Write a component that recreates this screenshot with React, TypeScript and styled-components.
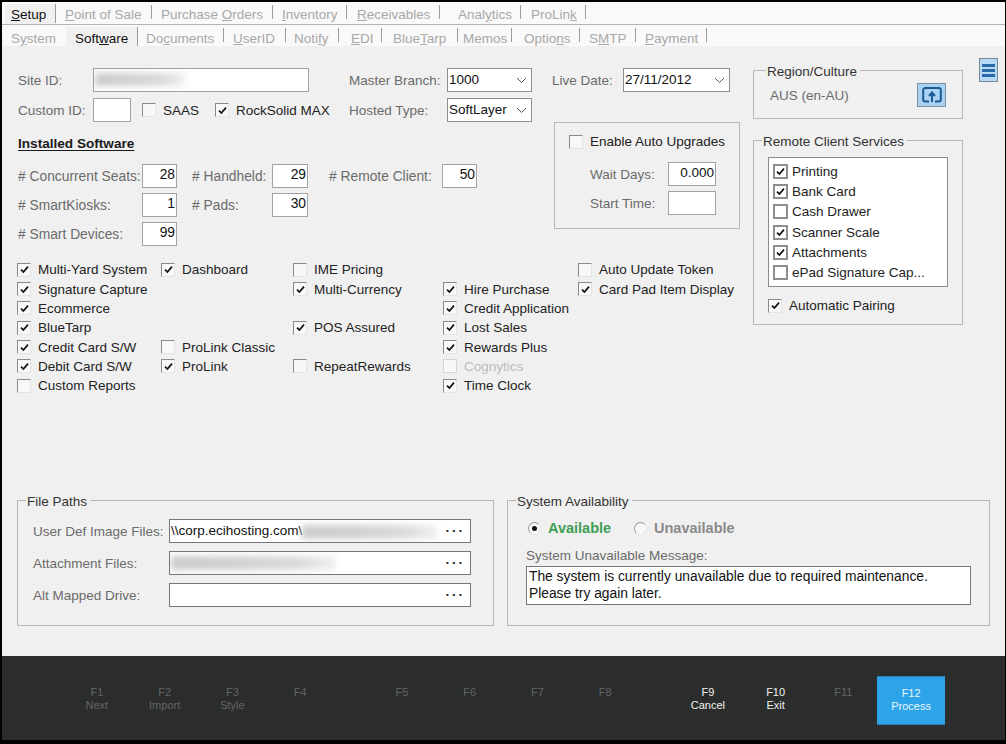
import React from "react";
import styled, { createGlobalStyle } from "styled-components";

const GlobalStyle = createGlobalStyle`
  html, body {
    margin: 0;
    padding: 0;
    background: #000;
  }
  body {
    font-family: "Liberation Sans", Arial, sans-serif;
    font-size: 13.5px;
    color: #222;
  }
`;

const Frame = styled.div`
  width: 1006px;
  height: 744px;
  box-sizing: border-box;
  padding: 2px 1px 4px 2px;
  background: #000;
`;
const Window = styled.div`
  height: 100%;
  display: flex;
  flex-direction: column;
  background: #f0f0f0;
`;

/* ---- tabs ---- */
const TabBar = styled.div<{ $main?: boolean }>`
  height: ${(p) => (p.$main ? "23px" : "21px")};
  box-sizing: border-box;
  display: flex;
  flex: none;
  background: #f9f9f9;
  padding: ${(p) => (p.$main ? "2px 0 0 3px" : "2px 0 0 3px")};
  line-height: ${(p) => (p.$main ? "22px" : "24px")};
  border-bottom: ${(p) => (p.$main ? "1px solid #b4b4b4" : "none")};
`;
const Tab = styled.div<{ $active?: boolean; $w: number; $pl?: number; $sep?: boolean }>`
  width: ${(p) => p.$w}px;
  box-sizing: border-box;
  padding-left: ${(p) => p.$pl ?? 9}px;
  white-space: nowrap;
  color: ${(p) => (p.$active ? "#111" : "#a8a8a8")};
  background-color: ${(p) => (p.$active ? "#f0f0f0" : "transparent")};
  background-image: ${(p) =>
    p.$sep === false ? "none" : "linear-gradient(#9c9c9c, #9c9c9c)"};
  background-repeat: no-repeat;
  background-position: right 0 top ${(p) => (p.$active ? 0 : 1)}px;
  background-size: 1px ${(p) => (p.$active ? 19 : 14)}px;
  u {
    text-underline-offset: 1px;
  }
`;

/* ---- main form ---- */
const Body = styled.div`
  flex: 1;
  display: flex;
  flex-direction: column;
  justify-content: space-between;
  padding: 12px 15px 30px 15px;
`;
const TopArea = styled.div`
  display: flex;
`;
const LeftMid = styled.div`
  width: 736px;
  flex: none;
  padding-top: 10px;
`;
const UpperForm = styled.div`
  display: flex;
  height: 192px;
`;
const LeftForm = styled.div`
  width: 534px;
  flex: none;
  padding-left: 1px;
`;
const MidForm = styled.div`
  width: 188px;
  flex: none;
`;
const Row = styled.div`
  display: flex;
  align-items: center;
  height: 24px;
  margin-bottom: 6px;
`;
const Label = styled.span<{ $w?: number; $ml?: number }>`
  width: ${(p) => p.$w ?? 75}px;
  margin-left: ${(p) => p.$ml ?? 0}px;
  flex: none;
  color: #6b6b6b;
  white-space: nowrap;
`;
const CheckSlot = styled.div<{ $w: number; $ml?: number }>`
  width: ${(p) => p.$w}px;
  margin-left: ${(p) => p.$ml ?? 0}px;
  flex: none;
`;
const Field = styled.div<{ $w: number; $right?: boolean }>`
  width: ${(p) => p.$w}px;
  height: 24px;
  flex: none;
  box-sizing: border-box;
  border: 1.5px solid #a2a2a2;
  background: #fff;
  color: #111;
  line-height: 20px;
  padding: 0 1px;
  text-align: ${(p) => (p.$right ? "right" : "left")};
  overflow: hidden;
  white-space: nowrap;
`;
const SelectBox = styled.div<{ $w: number }>`
  width: ${(p) => p.$w}px;
  height: 24px;
  flex: none;
  box-sizing: border-box;
  display: flex;
  align-items: center;
  justify-content: space-between;
  border: 1.5px solid #8f8f8f;
  background: #fff;
  color: #111;
  padding: 0 4px 0 1px;
  white-space: nowrap;
  line-height: 18px;
`;
const Blurred = styled.span<{ $w: number; $ml?: number; $h?: number }>`
  display: inline-block;
  vertical-align: middle;
  width: ${(p) => p.$w}px;
  height: ${(p) => p.$h ?? 13}px;
  margin-left: ${(p) => p.$ml ?? 0}px;
  background: linear-gradient(90deg, #cbcbcb, #d2d2d2 45%, #dadada 75%, #f0f0f0);
  filter: blur(3px);
`;
const Heading = styled.div`
  font-weight: bold;
  color: #1a1a1a;
  text-decoration: underline;
  text-underline-offset: 2px;
  margin-top: 14px;
  margin-bottom: 12px;
  line-height: 16px;
  font-size: 13.6px;
`;
const CountRow = styled.div`
  display: flex;
  align-items: center;
  height: 24px;
  margin-bottom: 5px;
  font-size: 13.8px;
`;

/* ---- checkboxes ---- */
const Box = styled.span<{ $big?: boolean; $off?: boolean }>`
  width: ${(p) => (p.$big ? 15 : 14)}px;
  height: ${(p) => (p.$big ? 15 : 14)}px;
  flex: none;
  box-sizing: border-box;
  display: inline-flex;
  align-items: center;
  justify-content: center;
  background: ${(p) => (p.$big ? "#fff" : "#f8f8f8")};
  border-style: solid;
  border-width: ${(p) => (p.$big ? "2px" : "1px")};
  border-color: ${(p) =>
    p.$big ? "#8d8d8d" : p.$off ? "#d6d6d6" : "#8a8a8a #e4e4e4 #e4e4e4 #8a8a8a"};
`;
const CheckWrap = styled.label<{ $off?: boolean; $gap?: number }>`
  display: flex;
  align-items: center;
  gap: ${(p) => p.$gap ?? 7}px;
  white-space: nowrap;
  color: ${(p) => (p.$off ? "#bcbcbc" : "#222")};
`;
const CheckGrid = styled.div`
  display: grid;
  grid-template-columns: 144px 132px 150px 135px 1fr;
  grid-auto-rows: 19.35px;
  align-items: center;
`;
const GridCell = styled.div<{ $col: number; $row: number }>`
  grid-column: ${(p) => p.$col};
  grid-row: ${(p) => p.$row};
`;

function Check({
  on,
  big,
  off,
  children,
  gap,
}: {
  on?: boolean;
  big?: boolean;
  off?: boolean;
  gap?: number;
  children?: React.ReactNode;
}) {
  return (
    <CheckWrap $off={off} $gap={gap}>
      <Box $big={big} $off={off}>
        {on && (
          <svg width="9" height="9" viewBox="0 0 9 9">
            <path d="M1 4.6 L3.4 7 L8 1.6" fill="none" stroke="#111" strokeWidth="1.7" />
          </svg>
        )}
      </Box>
      {children}
    </CheckWrap>
  );
}

const checks: [string, number, number, boolean, boolean?][] = [
  ["Multi-Yard System", 1, 1, true],
  ["Signature Capture", 1, 2, true],
  ["Ecommerce", 1, 3, true],
  ["BlueTarp", 1, 4, true],
  ["Credit Card S/W", 1, 5, true],
  ["Debit Card S/W", 1, 6, true],
  ["Custom Reports", 1, 7, false],
  ["Dashboard", 2, 1, true],
  ["ProLink Classic", 2, 5, false],
  ["ProLink", 2, 6, true],
  ["IME Pricing", 3, 1, false],
  ["Multi-Currency", 3, 2, true],
  ["POS Assured", 3, 4, true],
  ["RepeatRewards", 3, 6, false],
  ["Hire Purchase", 4, 2, true],
  ["Credit Application", 4, 3, true],
  ["Lost Sales", 4, 4, true],
  ["Rewards Plus", 4, 5, true],
  ["Cognytics", 4, 6, false, true],
  ["Time Clock", 4, 7, true],
  ["Auto Update Token", 5, 1, false],
  ["Card Pad Item Display", 5, 2, true],
];

/* ---- group boxes ---- */
const Group = styled.fieldset<{ $w?: number; $h: number; $pad?: string; $mb?: number }>`
  margin: 0 0 ${(p) => p.$mb ?? 0}px 0;
  min-width: 0;
  width: ${(p) => (p.$w ? `${p.$w}px` : "auto")};
  height: ${(p) => p.$h}px;
  box-sizing: border-box;
  border: 1px solid #b7b7b7;
  padding: ${(p) => p.$pad ?? "0"};
`;
const Legend = styled.legend<{ $ml?: number }>`
  margin-left: ${(p) => p.$ml ?? 0}px;
  padding: 3px 3px 0 1px;
  line-height: 14px;
  color: #333;
`;
const AutoBox = styled.div`
  height: 107px;
  box-sizing: border-box;
  margin-top: 30px;
  margin-left: 2px;
  border: 1px solid #b7b7b7;
  padding: 11px 23px 0 14px;
`;
const AutoHead = styled.div`
  margin-bottom: 13px;
`;
const AutoRow = styled.div`
  display: flex;
  align-items: center;
  justify-content: space-between;
  margin-bottom: 5px;
  padding-left: 21px;
`;

/* ---- right column ---- */
const RightCol = styled.div`
  width: 210px;
  flex: none;
  padding-top: 4px;
`;
const RegionBody = styled.div`
  display: flex;
  align-items: center;
  justify-content: space-between;
  padding: 4px 16px 0 16px;
  color: #6b6b6b;
`;
const IconBtn = styled.div`
  width: 29px;
  height: 24px;
  box-sizing: border-box;
  display: flex;
  align-items: center;
  justify-content: center;
  background: #a9d1f3;
  border: 1px solid #7f8f9e;
`;
const ListBox = styled.div`
  width: 180px;
  height: 130px;
  box-sizing: border-box;
  background: #fff;
  border: 1px solid #8a8a8a;
  padding: 3px 4px;
  margin-top: 8px;
  margin-bottom: 11px;
`;
const ListItem = styled.div`
  height: 20.3px;
  display: flex;
  align-items: center;
`;
const MenuCol = styled.div`
  margin-left: 16px;
  flex: none;
`;
const MenuBtn = styled.div`
  width: 19px;
  height: 24px;
  box-sizing: border-box;
  display: flex;
  flex-direction: column;
  justify-content: center;
  gap: 2px;
  padding: 0 2px;
  background: #b6d9f6;
  border: 1px solid #7a8794;
`;
const MenuBar = styled.i`
  display: block;
  height: 3px;
  background: #2a6aa8;
`;

/* ---- bottom groups ---- */
const BottomArea = styled.div`
  display: flex;
  gap: 13px;
`;
const PathRow = styled.div`
  display: flex;
  align-items: center;
  height: 24px;
  margin-bottom: 8px;
`;
const PathField = styled.div`
  width: 302px;
  height: 24px;
  box-sizing: border-box;
  display: flex;
  align-items: center;
  justify-content: space-between;
  background: #fff;
  border: 1px solid #777;
  padding: 0 5px 0 1px;
  color: #111;
  white-space: nowrap;
  overflow: hidden;
`;
const Dots = styled.span`
  font-weight: bold;
  letter-spacing: 2px;
  color: #222;
  line-height: 12px;
  flex: none;
`;
const RadioRow = styled.div`
  display: flex;
  align-items: center;
  margin: 0 0 11px 0;
  padding-left: 2px;
  height: 18px;
`;
const Radio = styled.span<{ $on?: boolean }>`
  width: 13px;
  height: 13px;
  box-sizing: border-box;
  flex: none;
  border-radius: 50%;
  border: 1px solid #9a9a9a;
  border-right-color: #e2e2e2;
  border-bottom-color: #e2e2e2;
  background: #f8f8f8;
  display: flex;
  align-items: center;
  justify-content: center;
  &::after {
    content: "";
    display: ${(p) => (p.$on ? "block" : "none")};
    width: 5px;
    height: 5px;
    border-radius: 50%;
    background: #111;
  }
`;
const RadioText = styled.span<{ $color: string; $w: number }>`
  width: ${(p) => p.$w}px;
  margin-left: 7px;
  font-weight: bold;
  font-size: 14.5px;
  color: ${(p) => p.$color};
`;
const MessageLabel = styled.div`
  color: #6b6b6b;
  line-height: 16px;
  margin-bottom: 2px;
`;
const MessageBox = styled.div`
  width: 445px;
  height: 39px;
  box-sizing: border-box;
  background: #fff;
  border: 1px solid #777;
  padding: 1px 2px;
  font-size: 13.8px;
  line-height: 17px;
  color: #111;
`;

/* ---- function key bar ---- */
const FooterBar = styled.div`
  height: 84px;
  flex: none;
  box-sizing: border-box;
  display: flex;
  align-items: center;
  padding: 5px 0 0 61px;
  background: #2b2d2c;
`;
const KeyGroup = styled.div<{ $gap: number }>`
  display: flex;
  margin-right: ${(p) => p.$gap}px;
`;
const Key = styled.div<{ $state?: "on" | "primary" }>`
  width: 67.75px;
  height: 49px;
  box-sizing: border-box;
  padding-top: 10px;
  text-align: center;
  font-size: 11px;
  line-height: 13px;
  color: ${(p) => (p.$state === "on" ? "#f0f0f0" : p.$state === "primary" ? "#e8f4fc" : "#636564")};
  background: ${(p) => (p.$state === "primary" ? "#2ea4e8" : "transparent")};
  border-top: ${(p) => (p.$state === "primary" ? "1px solid #2680b5" : "none")};
  border-bottom: ${(p) => (p.$state === "primary" ? "1px solid #2680b5" : "none")};
`;

const Chevron = () => (
  <svg width="11" height="7" viewBox="0 0 11 7">
    <path d="M1 1 L5.5 5.5 L10 1" fill="none" stroke="#555" strokeWidth="1" />
  </svg>
);

const UploadIcon = () => (
  <svg width="20" height="16" viewBox="0 0 20 16">
    <path
      d="M7 14.5 H3.2 A2 2 0 0 1 1.2 12.5 V3 A2 2 0 0 1 3.2 1 H16.8 A2 2 0 0 1 18.8 3 V12.5 A2 2 0 0 1 16.8 14.5 H13"
      fill="none"
      stroke="#1a5a92"
      strokeWidth="2"
    />
    <path d="M10 15 V6.5 M7 9 L10 5.5 L13 9" fill="none" stroke="#1a5a92" strokeWidth="2" />
  </svg>
);

const keyGroups: { f: string; label?: string; state?: "on" | "primary" }[][] = [
  [{ f: "F1", label: "Next" }, { f: "F2", label: "Import" }, { f: "F3", label: "Style" }, { f: "F4" }],
  [{ f: "F5" }, { f: "F6" }, { f: "F7" }, { f: "F8" }],
  [
    { f: "F9", label: "Cancel", state: "on" },
    { f: "F10", label: "Exit", state: "on" },
    { f: "F11" },
    { f: "F12", label: "Process", state: "primary" },
  ],
];

export default function App() {
  return (
    <Frame>
      <GlobalStyle />
      <Window>
        <TabBar $main>
          <Tab $active $w={51} $pl={6}><u>S</u>etup</Tab>
          <Tab $w={96}><u>P</u>oint of Sale</Tab>
          <Tab $w={121}>Purchase <u>O</u>rders</Tab>
          <Tab $w={74}><u>I</u>nventory</Tab>
          <Tab $w={93} $pl={10}><u>R</u>eceivables</Tab>
          <Tab $w={81} $pl={18}>Anal<u>y</u>tics</Tab>
          <Tab $w={65} $pl={10}>ProLin<u>k</u></Tab>
        </TabBar>
        <TabBar>
          <Tab $w={61} $pl={6} $sep={false}>S<u>y</u>stem</Tab>
          <Tab $active $w={72}>Soft<u>w</u>are</Tab>
          <Tab $w={86} $pl={8}>Do<u>c</u>uments</Tab>
          <Tab $w={62}><u>U</u>serID</Tab>
          <Tab $w={53} $pl={8}>Noti<u>f</u>y</Tab>
          <Tab $w={43} $pl={12}><u>E</u>DI</Tab>
          <Tab $w={76} $pl={11}>Blue<u>T</u>arp</Tab>
          <Tab $w={54} $pl={5}>Memos</Tab>
          <Tab $w={68} $pl={12}>Optio<u>n</u>s</Tab>
          <Tab $w={56}>S<u>M</u>TP</Tab>
          <Tab $w={71}><u>P</u>ayment</Tab>
        </TabBar>

        <Body>
          <TopArea>
            <LeftMid>
              <UpperForm>
                <LeftForm>
                  <Row>
                    <Label>Site ID:</Label>
                    <Field $w={216}>
                      <Blurred $w={90} />
                    </Field>
                    <Label $w={98} $ml={40}>Master Branch:</Label>
                    <SelectBox $w={85}>1000<Chevron /></SelectBox>
                  </Row>
                  <Row>
                    <Label>Custom ID:</Label>
                    <Field $w={38} />
                    <CheckSlot $w={73} $ml={11}>
                      <Check>SAAS</Check>
                    </CheckSlot>
                    <CheckSlot $w={134}>
                      <Check on>RockSolid MAX</Check>
                    </CheckSlot>
                    <Label $w={98}>Hosted Type:</Label>
                    <SelectBox $w={85}>SoftLayer<Chevron /></SelectBox>
                  </Row>
                  <Heading>Installed Software</Heading>
                  <CountRow>
                    <Label $w={124}># Concurrent Seats:</Label>
                    <Field $w={35} $right>28</Field>
                    <Label $w={80} $ml={15}># Handheld:</Label>
                    <Field $w={36} $right>29</Field>
                    <Label $w={113} $ml={21}># Remote Client:</Label>
                    <Field $w={35} $right>50</Field>
                  </CountRow>
                  <CountRow>
                    <Label $w={124}># SmartKiosks:</Label>
                    <Field $w={35} $right>1</Field>
                    <Label $w={80} $ml={15}># Pads:</Label>
                    <Field $w={36} $right>30</Field>
                  </CountRow>
                  <CountRow>
                    <Label $w={124}># Smart Devices:</Label>
                    <Field $w={35} $right>99</Field>
                  </CountRow>
                </LeftForm>
                <MidForm>
                  <Row>
                    <Label $w={71}>Live Date:</Label>
                    <SelectBox $w={107}>27/11/2012<Chevron /></SelectBox>
                  </Row>
                  <AutoBox>
                    <AutoHead>
                      <Check>Enable Auto Upgrades</Check>
                    </AutoHead>
                    <AutoRow>
                      <Label $w={76}>Wait Days:</Label>
                      <Field $w={48} $right>0.000</Field>
                    </AutoRow>
                    <AutoRow>
                      <Label $w={76}>Start Time:</Label>
                      <Field $w={48} />
                    </AutoRow>
                  </AutoBox>
                </MidForm>
              </UpperForm>
              <CheckGrid>
                {checks.map(([name, col, row, on, off]) => (
                  <GridCell key={name} $col={col} $row={row}>
                    <Check on={on} off={off}>{name}</Check>
                  </GridCell>
                ))}
              </CheckGrid>
            </LeftMid>

            <RightCol>
              <Group $h={57} $mb={13}>
                <Legend $ml={12}>Region/Culture</Legend>
                <RegionBody>
                  AUS (en-AU)
                  <IconBtn><UploadIcon /></IconBtn>
                </RegionBody>
              </Group>
              <Group $h={193} $pad="0 14px">
                <Legend $ml={-6}>Remote Client Services</Legend>
                <ListBox>
                  <ListItem><Check big on gap={4}>Printing</Check></ListItem>
                  <ListItem><Check big on gap={4}>Bank Card</Check></ListItem>
                  <ListItem><Check big gap={4}>Cash Drawer</Check></ListItem>
                  <ListItem><Check big on gap={4}>Scanner Scale</Check></ListItem>
                  <ListItem><Check big on gap={4}>Attachments</Check></ListItem>
                  <ListItem><Check big gap={4}>ePad Signature Cap...</Check></ListItem>
                </ListBox>
                <Check on gap={7}>Automatic Pairing</Check>
              </Group>
            </RightCol>

            <MenuCol>
              <MenuBtn>
                <MenuBar />
                <MenuBar />
                <MenuBar />
              </MenuBtn>
            </MenuCol>
          </TopArea>

          <BottomArea>
            <Group $w={477} $h={134} $pad="10px 22px 0 15px">
              <Legend $ml={-7}>File Paths</Legend>
              <PathRow>
                <Label $w={136}>User Def Image Files:</Label>
                <PathField>
                  <span>{"\\\\corp.ecihosting.com\\"}<Blurred $w={135} $h={14} /></span>
                  <Dots>···</Dots>
                </PathField>
              </PathRow>
              <PathRow>
                <Label $w={136}>Attachment Files:</Label>
                <PathField>
                  <Blurred $w={165} $h={14} />
                  <Dots>···</Dots>
                </PathField>
              </PathRow>
              <PathRow>
                <Label $w={136}>Alt Mapped Drive:</Label>
                <PathField>
                  <span />
                  <Dots>···</Dots>
                </PathField>
              </PathRow>
            </Group>
            <Group $w={483} $h={134} $pad="10px 18px 0 18px">
              <Legend $ml={-10}>System Availability</Legend>
              <RadioRow>
                <Radio $on />
                <RadioText $color="#3f9f55" $w={86}>Available</RadioText>
                <Radio />
                <RadioText $color="#8a8a8a" $w={100}>Unavailable</RadioText>
              </RadioRow>
              <MessageLabel>System Unavailable Message:</MessageLabel>
              <MessageBox>
                The system is currently unavailable due to required maintenance.
                <br />
                Please try again later.
              </MessageBox>
            </Group>
          </BottomArea>
        </Body>

        <FooterBar>
          {keyGroups.map((group, i) => (
            <KeyGroup key={i} $gap={i === 0 ? 34 : 35}>
              {group.map((k) => (
                <Key key={k.f} $state={k.state}>
                  {k.f}
                  <br />
                  {k.label}
                </Key>
              ))}
            </KeyGroup>
          ))}
        </FooterBar>
      </Window>
    </Frame>
  );
}
